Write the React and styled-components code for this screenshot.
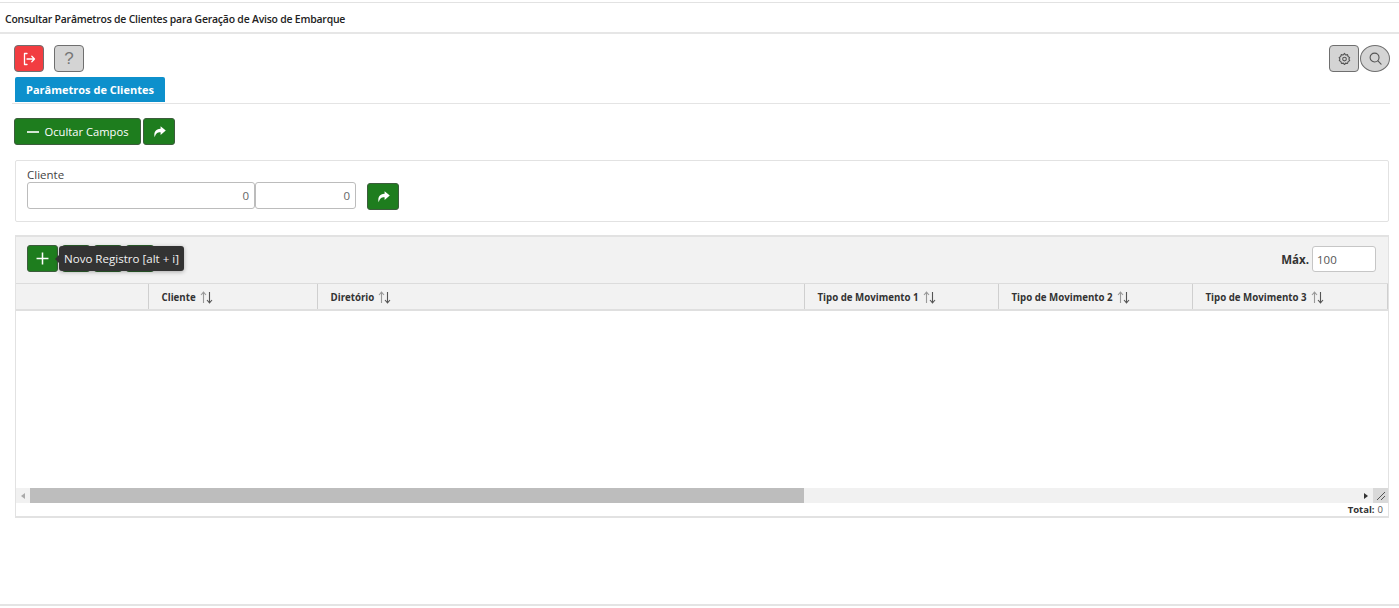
import React from "react";
import styled, { createGlobalStyle } from "styled-components";

const Global = createGlobalStyle`
  html, body { margin: 0; padding: 0; background: #fff; }
  body { font-family: "Open Sans", "Noto Sans", sans-serif; color: #333; overflow: hidden; }
`;

const Page = styled.div`
  width: 1399px; height: 608px; display: flex; flex-direction: column; box-sizing: border-box;
  padding-top: 2px; position: relative;
`;
const TitleBar = styled.header`
  height: 32px; box-sizing: border-box; flex: none;
  border-top: 1px solid #e2e2e2; border-bottom: 2px solid #e6e6e6;
  display: flex; align-items: center; padding-left: 5px; padding-top: 3px;
  font-size: 10.45px; font-weight: 600; color: #222; letter-spacing: -0.02em;
`;
const ActionRow = styled.div`
  display: flex; justify-content: space-between; padding: 11px 9px 0 14px; height: 27px; flex: none;
`;
const Group = styled.div`display: flex; gap: ${p => p.$gap || 0}px;`;
const ActionButton = styled.button`
  width: ${p => p.$w || 30}px; height: 27px; padding: 0; box-sizing: border-box;
  display: flex; align-items: center; justify-content: center;
  border: 1px solid #6f6f6f; border-radius: ${p => p.$round ? "50%" : "4px"};
  background: ${p => p.$bg || "#d4d4d4"}; color: ${p => p.$fg || "#666"};
`;
const HelpGlyph = styled.span`font-size: 17px; font-weight: 300; color: #777;`;
const TabStrip = styled.nav`
  margin: 5px 9px 0 12px; height: 26px; border-bottom: 1px solid #e4e4e4; flex: none;
  padding-left: 3px; display: flex;
`;
const Tab = styled.div`
  width: 150px; height: 25px; background: #0d90cc; color: #fff; border-radius: 2px 2px 0 0;
  display: flex; align-items: center; justify-content: center;
  font-size: 11px; font-weight: 700;
`;
const GreenButton = styled.button`
  height: 27px; box-sizing: border-box; padding: 0; width: ${p => p.$w || 32}px;
  display: flex; align-items: center; justify-content: center; gap: ${p => p.$gap || 0}px;
  background: #1e7d1e; color: #fff; border: 1px solid #3c5c3c; border-radius: 3px;
  font-family: inherit; font-size: 11.2px; flex: none;
`;
const FieldRow = styled.div`
  display: flex; gap: 2px; padding: 14px 0 0 14px; flex: none;
`;
const FilterPanel = styled.section`
  margin: 15px 10px 0 15px; height: 62px; box-sizing: border-box; flex: none;
  border: 1px solid #e2e2e2; border-radius: 2px; padding: 7px 12px 0 11px;
`;
const FieldLabel = styled.div`
  font-size: 11.5px; line-height: 14px; color: #444;
`;
const Fields = styled.div`display: flex; align-items: flex-start;`;
const NumberInput = styled.div`
  width: ${p => p.$w}px; height: 27px; box-sizing: border-box; background: #fff;
  border: 1px solid #bcbcbc; border-radius: 3px; font-size: 11.5px; color: #666;
  display: flex; align-items: center; justify-content: flex-end; padding-right: 5px;
`;
const SearchSlot = styled.div`margin: 1px 0 0 11px;`;
const GridPanel = styled.section`
  margin: 13px 10px 0 15px; height: 283px; box-sizing: border-box; flex: none;
  border: 1px solid #e2e2e2; border-top-width: 2px; border-bottom-width: 2px;
  display: flex; flex-direction: column;
`;
const GridToolbar = styled.div`
  height: 46px; flex: none; background: #f2f2f2; position: relative;
  display: flex; align-items: flex-start; justify-content: space-between;
  padding: 8px 12px 0 11px; box-sizing: border-box;
`;
const Tools = styled.div`display: flex; align-items: center; gap: 4px; position: relative;`;
const HiddenTool = styled.div`
  width: 28px; height: 27px; background: #2c5f2c; border-radius: 3px;
`;
const Tooltip = styled.div`
  position: absolute; left: 32px; top: 1px; height: 25px; width: 125px; box-sizing: border-box;
  background: #333; color: #f2f2f2; border-radius: 3px; font-size: 11.55px; white-space: nowrap;
  display: flex; align-items: center; padding-left: 5px; box-shadow: 0 1px 4px rgba(0,0,0,.3);
  &::before {
    content: ""; position: absolute; left: -4px; top: 9px; border: 4px solid transparent;
    border-left: 0; border-right-color: #333;
  }
`;
const MaxGroup = styled.div`display: flex; align-items: center; gap: 3px; margin-top: 1px;`;
const MaxLabel = styled.span`font-size: 11.5px; font-weight: 700; color: #333;`;
const MaxInput = styled.div`
  width: 64px; height: 26px; box-sizing: border-box; background: #fff;
  border: 1px solid #c6c6c6; border-radius: 3px; font-size: 11.5px; color: #555;
  display: flex; align-items: center; padding-left: 4px;
`;
const HeaderRow = styled.div`
  display: flex; height: 28px; flex: none; box-sizing: border-box; background: #f2f2f2;
  border-top: 1px solid #dcdcdc; border-bottom: 2px solid #dfdfdf;
`;
const HeaderCell = styled.div`
  width: ${p => p.$w}px; flex: none; box-sizing: border-box; padding: 2px 0 0 12.5px;
  border-right: 1px solid #cfcfcf; display: flex; align-items: center; gap: 4px;
  font-size: 9.7px; font-weight: 700; color: #333; white-space: nowrap;
`;
const GridBody = styled.div`flex: 1; background: #fff;`;
const ScrollBar = styled.div`
  height: 15px; flex: none; display: flex; align-items: stretch; background: #f1f1f1;
`;
const ScrollEnd = styled.div`
  width: ${p => p.$w}px; flex: none; display: flex; align-items: center; justify-content: center;
  background: ${p => p.$bg || "transparent"};
`;
const ScrollThumb = styled.div`width: 774px; flex: none; background: #bdbdbd;`;
const ScrollTrack = styled.div`flex: 1;`;
const Arrow = styled.i`
  width: 0; height: 0; border: 3.5px solid transparent;
  ${p => p.$left
    ? "border-left: 0; border-right: 4px solid #aaa;"
    : "border-right: 0; border-left: 4px solid #333;"}
`;
const TotalRow = styled.div`
  height: 13px; display: flex; align-items: center; justify-content: flex-end; gap: 3px;
  padding-right: 5px; font-size: 9.5px; color: #555; flex: none;
`;
const TotalLabel = styled.b`color: #333;`;
const BottomLine = styled.footer`
  position: absolute; left: 0; right: 0; top: 604px; height: 2px; background: #e4e4e4;
`;

const ExitIcon = () => (
  <svg width="14" height="14" viewBox="0 0 14 14" fill="none" stroke="#fff" strokeWidth="1.3" strokeLinecap="round" strokeLinejoin="round">
    <path d="M5 1.5H2.5v11H5" /><path d="M5 7h7.5M9.8 4.2 12.5 7l-2.7 2.8" />
  </svg>
);
const GearIcon = () => (
  <svg width="13" height="13" viewBox="0 0 24 24" fill="none" stroke="#555" strokeWidth="2" strokeLinejoin="round">
    <path d="M12 2.5l2 3 3.6-.6 1 3.4 3 2-1.6 2.7 1.6 2.7-3 2-1 3.4-3.6-.6-2 3-2-3-3.6.6-1-3.4-3-2L3.6 13 2 10.3l3-2 1-3.4 3.6.6z" />
    <circle cx="12" cy="13" r="3.4" />
  </svg>
);
const SearchIcon = () => (
  <svg width="13" height="13" viewBox="0 0 14 14" fill="none" stroke="#555" strokeWidth="1.2" strokeLinecap="round">
    <circle cx="6" cy="6" r="4.8" /><path d="M9.6 9.6 13 13" />
  </svg>
);
const ShareIcon = () => (
  <svg width="13" height="12" viewBox="0 0 12 11" fill="#fff">
    <path d="M7 0.3 11.8 4.2 7 8.2V5.8C4.4 5.7 2.6 6.6 1.6 10.4 0.3 6 2.5 2.8 7 2.6z" />
  </svg>
);
const SortIcon = () => (
  <svg width="13" height="13" viewBox="0 0 13 13" fill="none" strokeWidth="1.1">
    <path d="M3.5 12V1.5M1 4l2.5-2.8L6 4" stroke="#999" />
    <path d="M9.5 1v10.5M7 9l2.5 2.8L12 9" stroke="#555" />
  </svg>
);
const PlusIcon = () => (
  <svg width="13" height="13" viewBox="0 0 12 12" stroke="#fff" strokeWidth="1.4"><path d="M6 .5v11M.5 6h11" /></svg>
);
const MinusIcon = () => (
  <svg width="12" height="12" viewBox="0 0 12 12" stroke="#fff" strokeWidth="1.6"><path d="M0 6h12" /></svg>
);
const GripIcon = () => (
  <svg width="11" height="11" viewBox="0 0 11 11" stroke="#555" strokeWidth="1"><path d="M2 10 10 2M6 10l4-4" /></svg>
);

const columns = [
  { w: 133, label: "" },
  { w: 169, label: "Cliente" },
  { w: 487, label: "Diretório" },
  { w: 194, label: "Tipo de Movimento 1" },
  { w: 194, label: "Tipo de Movimento 2" },
  { w: 195, label: "Tipo de Movimento 3" },
];

export default function App() {
  return (
    <Page>
      <Global />
      <TitleBar>Consultar Parâmetros de Clientes para Geração de Aviso de Embarque</TitleBar>
      <ActionRow>
        <Group $gap={10}>
          <ActionButton $bg="#f23d41"><ExitIcon /></ActionButton>
          <ActionButton><HelpGlyph>?</HelpGlyph></ActionButton>
        </Group>
        <Group $gap={1}>
          <ActionButton><GearIcon /></ActionButton>
          <ActionButton $round><SearchIcon /></ActionButton>
        </Group>
      </ActionRow>
      <TabStrip><Tab>Parâmetros de Clientes</Tab></TabStrip>
      <FieldRow>
        <GreenButton $w={127} $gap={6}><MinusIcon />Ocultar Campos</GreenButton>
        <GreenButton $w={32}><ShareIcon /></GreenButton>
      </FieldRow>
      <FilterPanel>
        <FieldLabel>Cliente</FieldLabel>
        <Fields>
          <NumberInput $w={228}>0</NumberInput>
          <NumberInput $w={101}>0</NumberInput>
          <SearchSlot><GreenButton $w={32}><ShareIcon /></GreenButton></SearchSlot>
        </Fields>
      </FilterPanel>
      <GridPanel>
        <GridToolbar>
          <Tools>
            <GreenButton $w={31}><PlusIcon /></GreenButton>
            <HiddenTool />
            <HiddenTool />
            <HiddenTool />
            <Tooltip>Novo Registro [alt + i]</Tooltip>
          </Tools>
          <MaxGroup>
            <MaxLabel>Máx.</MaxLabel>
            <MaxInput>100</MaxInput>
          </MaxGroup>
        </GridToolbar>
        <HeaderRow>
          {columns.map((c, i) => (
            <HeaderCell key={i} $w={c.w}>
              {c.label}{c.label && <SortIcon />}
            </HeaderCell>
          ))}
        </HeaderRow>
        <GridBody />
        <ScrollBar>
          <ScrollEnd $w={14}><Arrow $left /></ScrollEnd>
          <ScrollThumb />
          <ScrollTrack />
          <ScrollEnd $w={14}><Arrow /></ScrollEnd>
          <ScrollEnd $w={15} $bg="#d9d9d9"><GripIcon /></ScrollEnd>
        </ScrollBar>
        <TotalRow><TotalLabel>Total:</TotalLabel>0</TotalRow>
      </GridPanel>
      <BottomLine />
    </Page>
  );
}
